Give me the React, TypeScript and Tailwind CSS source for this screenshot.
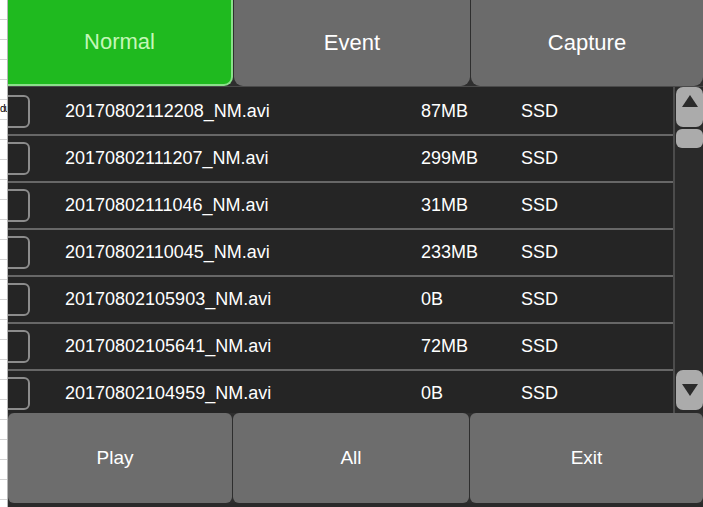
const FILES = [
  { name: '20170802112208_NM.avi', size: '87MB', disk: 'SSD' },
  { name: '20170802111207_NM.avi', size: '299MB', disk: 'SSD' },
  { name: '20170802111046_NM.avi', size: '31MB', disk: 'SSD' },
  { name: '20170802110045_NM.avi', size: '233MB', disk: 'SSD' },
  { name: '20170802105903_NM.avi', size: '0B', disk: 'SSD' },
  { name: '20170802105641_NM.avi', size: '72MB', disk: 'SSD' },
  { name: '20170802104959_NM.avi', size: '0B', disk: 'SSD' }
];

const font = { fontFamily: '"Liberation Sans", Arial, sans-serif' };

// the sheet peeking out on the left of the screenshot
const SheetStrip = () => (
  <div className="relative h-full w-[8px] shrink-0 overflow-hidden border-r border-[#b8b8b8] bg-white">
    {Array.from({ length: 25 }).map((_, i) => (
      <div key={i} className="h-[20px] border-b border-[#d4d4d4]" />
    ))}
    <span className="absolute left-0 top-[104px] text-[10px] leading-none tracking-[-1px] text-black">du</span>
  </div>
);

const Arrow = ({ up }: { up?: boolean }) => (
  <svg width="18" height="14" viewBox="0 0 18 14">
    <path d={up ? 'M9 1 L17 13 L1 13 Z' : 'M1 1 L17 1 L9 13 Z'} fill="#2b2b2b" />
  </svg>
);

export default function App() {
  return (
    <div className="flex h-[507px] w-[703px] overflow-hidden bg-white" style={font}>
      <SheetStrip />
      <div className="flex min-w-0 flex-1 flex-col bg-[#2a2a2a]">
        {/* tabs */}
        <div className="flex h-[86px] shrink-0 gap-[1px] bg-[#2e2e2e]">
          <div className="flex w-[225px] items-center justify-center rounded-br-[9px] border-b-2 border-r-2 border-[#8be08b] bg-[#1fba1f] pb-[2px] text-[22px] text-[#c4f7b8]">
            Normal
          </div>
          <div className="flex w-[236px] items-center justify-center rounded-b-[9px] bg-[#6b6b6b] pb-[2px] text-[22px] text-white">
            Event
          </div>
          <div className="flex flex-1 items-center justify-center rounded-b-[9px] bg-[#6b6b6b] pb-[2px] text-[22px] text-white">
            Capture
          </div>
        </div>

        {/* file list */}
        <div className="flex h-[327px] shrink-0 overflow-hidden border-t border-[#4a4a4a]">
          <div className="flex-1 overflow-hidden bg-[#252525] pt-[2px]">
            {FILES.map((f) => (
              <div
                key={f.name}
                className="flex h-[47px] shrink-0 items-center border-b-2 border-[#676767] bg-[#252525] text-[18px] text-white"
              >
                <div className="ml-[-9px] h-[33px] w-[31px] shrink-0 rounded-[6px] border-2 border-[#8c8c8c]" />
                <span className="ml-[35px] w-[356px] shrink-0">{f.name}</span>
                <span className="w-[100px] shrink-0">{f.size}</span>
                <span>{f.disk}</span>
              </div>
            ))}
          </div>
          <div className="flex w-[30px] shrink-0 flex-col border-l-2 border-[#4c4c4c] bg-[#2a2a2a] pl-[1px]">
            <div className="flex h-[40px] items-start justify-center rounded-[7px] bg-[#ababab] pt-[7px]">
              <Arrow up />
            </div>
            <div className="mt-[2px] h-[19px] rounded-[6px] bg-[#ababab]" />
            <div className="flex-1" />
            <div className="mb-[3px] flex h-[40px] items-center justify-center rounded-[7px] bg-[#ababab]">
              <Arrow />
            </div>
          </div>
        </div>

        {/* actions */}
        <div className="flex h-[90px] shrink-0 gap-[1px] bg-[#2e2e2e]">
          <div className="flex w-[224px] items-center justify-center rounded-[6px] bg-[#6d6d6d] pr-[10px] text-[19px] text-white">
            Play
          </div>
          <div className="flex w-[236px] items-center justify-center rounded-[6px] bg-[#6d6d6d] text-[19px] text-white">
            All
          </div>
          <div className="flex flex-1 items-center justify-center rounded-[6px] bg-[#6d6d6d] text-[19px] text-white">
            Exit
          </div>
        </div>
        <div className="flex-1 bg-[#2a2a2a]" />
      </div>
    </div>
  );
}
